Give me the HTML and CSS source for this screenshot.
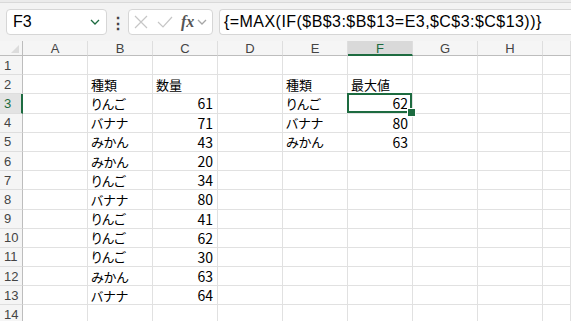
FILE: index.html
```html
<!DOCTYPE html>
<html lang="ja">
<head>
  <meta charset="UTF-8" />
  <title>Excel - 最大値</title>
  <link rel="stylesheet" href="styles.css">
</head>
<body>
  <div class="ribbon-edge"></div>

  <div class="formula-row">
    <div class="name-box">
      <span>F3</span>
      <svg class="chev green" width="10" height="6" viewBox="0 0 10 6"><path d="M1 1 L5 5 L9 1" /></svg>
    </div>
    <div class="grip">⋮</div>
    <div class="fn-box">
      <svg class="fn-icon" width="14" height="14" viewBox="0 0 14 14"><path d="M1 1 L13 13 M13 1 L1 13" /></svg>
      <svg class="fn-icon" width="16" height="14" viewBox="0 0 16 14"><path d="M1 7 L6 12 L15 2" /></svg>
      <span class="fx">fx</span>
      <svg class="chev grey" width="10" height="6" viewBox="0 0 10 6"><path d="M1 1 L5 5 L9 1" /></svg>
    </div>
    <div class="formula-input">{=MAX(IF($B$3:$B$13=E3,$C$3:$C$13))}</div>
  </div>

  <div class="sheet">
    <div class="corner"></div>
    <div class="col-head">A</div>
    <div class="col-head">B</div>
    <div class="col-head">C</div>
    <div class="col-head">D</div>
    <div class="col-head">E</div>
    <div class="col-head active">F</div>
    <div class="col-head">G</div>
    <div class="col-head">H</div>
    <div class="col-head"></div>

    <div class="row-head">1</div>
    <div class="cell"></div><div class="cell"></div><div class="cell"></div><div class="cell"></div><div class="cell"></div><div class="cell"></div><div class="cell"></div><div class="cell"></div><div class="cell"></div>

    <div class="row-head">2</div>
    <div class="cell"></div><div class="cell">種類</div><div class="cell">数量</div><div class="cell"></div><div class="cell">種類</div><div class="cell">最大値</div><div class="cell"></div><div class="cell"></div><div class="cell"></div>

    <div class="row-head active">3</div>
    <div class="cell"></div><div class="cell">りんご</div><div class="cell num">61</div><div class="cell"></div><div class="cell">りんご</div><div class="cell num selected">62</div><div class="cell"></div><div class="cell"></div><div class="cell"></div>

    <div class="row-head">4</div>
    <div class="cell"></div><div class="cell">バナナ</div><div class="cell num">71</div><div class="cell"></div><div class="cell">バナナ</div><div class="cell num">80</div><div class="cell"></div><div class="cell"></div><div class="cell"></div>

    <div class="row-head">5</div>
    <div class="cell"></div><div class="cell">みかん</div><div class="cell num">43</div><div class="cell"></div><div class="cell">みかん</div><div class="cell num">63</div><div class="cell"></div><div class="cell"></div><div class="cell"></div>

    <div class="row-head">6</div>
    <div class="cell"></div><div class="cell">みかん</div><div class="cell num">20</div><div class="cell"></div><div class="cell"></div><div class="cell"></div><div class="cell"></div><div class="cell"></div><div class="cell"></div>

    <div class="row-head">7</div>
    <div class="cell"></div><div class="cell">りんご</div><div class="cell num">34</div><div class="cell"></div><div class="cell"></div><div class="cell"></div><div class="cell"></div><div class="cell"></div><div class="cell"></div>

    <div class="row-head">8</div>
    <div class="cell"></div><div class="cell">バナナ</div><div class="cell num">80</div><div class="cell"></div><div class="cell"></div><div class="cell"></div><div class="cell"></div><div class="cell"></div><div class="cell"></div>

    <div class="row-head">9</div>
    <div class="cell"></div><div class="cell">りんご</div><div class="cell num">41</div><div class="cell"></div><div class="cell"></div><div class="cell"></div><div class="cell"></div><div class="cell"></div><div class="cell"></div>

    <div class="row-head">10</div>
    <div class="cell"></div><div class="cell">りんご</div><div class="cell num">62</div><div class="cell"></div><div class="cell"></div><div class="cell"></div><div class="cell"></div><div class="cell"></div><div class="cell"></div>

    <div class="row-head">11</div>
    <div class="cell"></div><div class="cell">りんご</div><div class="cell num">30</div><div class="cell"></div><div class="cell"></div><div class="cell"></div><div class="cell"></div><div class="cell"></div><div class="cell"></div>

    <div class="row-head">12</div>
    <div class="cell"></div><div class="cell">みかん</div><div class="cell num">63</div><div class="cell"></div><div class="cell"></div><div class="cell"></div><div class="cell"></div><div class="cell"></div><div class="cell"></div>

    <div class="row-head">13</div>
    <div class="cell"></div><div class="cell">バナナ</div><div class="cell num">64</div><div class="cell"></div><div class="cell"></div><div class="cell"></div><div class="cell"></div><div class="cell"></div><div class="cell"></div>

    <div class="row-head">14</div>
    <div class="cell"></div><div class="cell"></div><div class="cell"></div><div class="cell"></div><div class="cell"></div><div class="cell"></div><div class="cell"></div><div class="cell"></div><div class="cell"></div>
  </div>
</body>
</html>
```

FILE: styles.css
```css
* {
  box-sizing: border-box;
}

body {
  margin: 0;
  width: 571px;
  height: 321px;
  overflow: hidden;
  background: #f3f3f3;
  font-family: "Noto Sans CJK JP", sans-serif;
  color: #000;
}

.ribbon-edge {
  height: 3px;
  background: #ebebeb;
  border-bottom: 1px solid #d9d9d9;
}

/* formula bar */
.formula-row {
  display: flex;
  align-items: center;
  height: 38px;
  padding: 4px 0 4px 6px;
}

.name-box, .fn-box, .formula-input {
  height: 26px;
  background: #fff;
  border: 1px solid #d6d6d6;
  border-radius: 4px;
  display: flex;
  align-items: center;
}

.name-box {
  width: 101px;
  padding: 0 6px 0 6px;
  justify-content: space-between;
  font-family: "Liberation Sans", sans-serif;
  font-size: 16px;
}

.chev path {
  fill: none;
  stroke-width: 1.3;
}

.chev.green path {
  stroke: #1d6b40;
}

.chev.grey path {
  stroke: #a6a6a6;
}

.grip {
  width: 21px;
  text-align: center;
  font-size: 16px;
  font-weight: bold;
  color: #444;
}

.fn-box {
  width: 85px;
  padding: 0 3px 0 5px;
  gap: 9px;
}

.fn-icon path {
  fill: none;
  stroke: #c6c6c6;
  stroke-width: 1.2;
}

.fx {
  font-family: "Liberation Serif", serif;
  font-style: italic;
  font-weight: bold;
  font-size: 16px;
  color: #555;
  margin-left: -1px;
  margin-right: -6px;
}

.formula-input {
  flex: 1;
  margin-left: 6px;
  border-right: none;
  border-radius: 4px 0 0 4px;
  padding-left: 4px;
  font-family: "Liberation Sans", sans-serif;
  font-size: 16px;
  letter-spacing: 0.45px;
}

/* grid */
.sheet {
  display: grid;
  grid-template-columns: 23px repeat(8, 65px) 28px;
  grid-template-rows: 15px repeat(14, 19.2px);
  background: #fff;
  font-size: 13px;
}

.corner, .col-head, .row-head {
  background: #f5f5f5;
  color: #444;
}

.corner {
  position: relative;
  border-right: 1px solid #bdbdbd;
  border-bottom: 1px solid #bdbdbd;
}

.corner::after {
  content: "";
  position: absolute;
  right: 3px;
  bottom: 2px;
  border-left: 8px solid transparent;
  border-bottom: 8px solid #dcdcdc;
}

.col-head {
  border-right: 1px solid #dedede;
  border-bottom: 1px solid #bdbdbd;
  text-align: center;
  font-family: "Liberation Sans", sans-serif;
  font-size: 13px;
  line-height: 15px;
}

.col-head.active {
  background: #d9d9d9;
  color: #1d6b40;
  border-bottom: 2px solid #1d6b40;
}

.row-head {
  border-right: 1px solid #bdbdbd;
  border-bottom: 1px solid #dedede;
  padding-left: 4px;
  font-family: "Liberation Sans", sans-serif;
  font-size: 13px;
  display: flex;
  align-items: center;
}

.row-head.active {
  background: #e3e3e3;
  color: #1d6b40;
  border-right: 2px solid #1d6b40;
}

.cell {
  border-right: 1px solid #e1e1e1;
  border-bottom: 1px solid #e1e1e1;
  padding: 0 3px;
  display: flex;
  align-items: center;
  font-feature-settings: "palt";
  white-space: nowrap;
}

.cell.num {
  justify-content: flex-end;
  font-size: 14px;
  padding-right: 4px;
}

.cell.selected {
  position: relative;
}

.cell.selected::before {
  content: "";
  position: absolute;
  left: -1px;
  top: -1px;
  right: 0;
  bottom: 0;
  border: 2px solid #1d6b40;
}

.cell.selected::after {
  content: "";
  position: absolute;
  right: -4px;
  bottom: -4px;
  width: 7px;
  height: 7px;
  background: #1d6b40;
  border: 1px solid #fff;
}
```
